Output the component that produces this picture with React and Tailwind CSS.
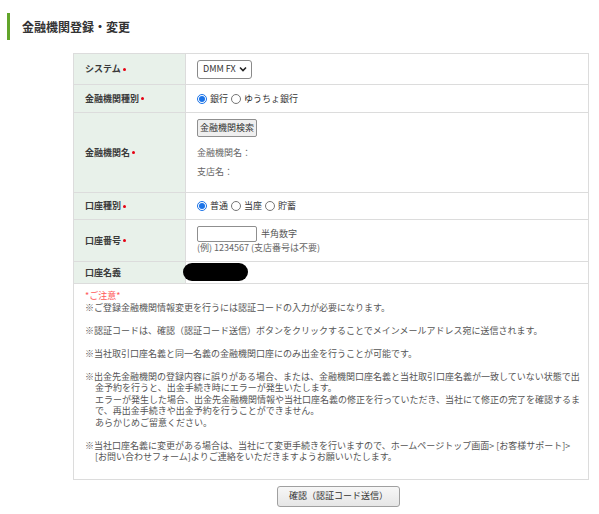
import React from "react";

function Radio({ checked }) {
  return checked ? (
    <span className="inline-flex h-[10px] w-[10px] shrink-0 items-center justify-center rounded-full border border-[#1a73e8] bg-white">
      <span className="block h-[6px] w-[6px] rounded-full bg-[#1a73e8]" />
    </span>
  ) : (
    <span className="inline-block h-[10px] w-[10px] shrink-0 rounded-full border border-[#767676] bg-white" />
  );
}

function Label({ children, req = true }) {
  return (
    <div className="flex items-center border-b border-r border-[#dcdcdc] bg-[#e8f1ea] pl-[11px] font-semibold text-[#3a3a3a]">
      <span>{children}</span>
      {req && <span className="ml-[2px] block h-[3px] w-[3px] rounded-full bg-[#e60012]" />}
    </div>
  );
}

function Value({ children, className = "" }) {
  return (
    <div className={"flex border-b border-r border-[#dcdcdc] bg-white pl-[11px] text-[#333] " + className}>
      {children}
    </div>
  );
}

export default function App() {
  return (
    <div className="min-h-[514px] w-[599px] bg-white pl-[7px] pt-[13px] text-[9px] [font-family:'Noto_Sans_CJK_JP',sans-serif]">
      <div className="flex h-[27px] items-center border-l-[3px] border-[#62a52a] pl-[12px] text-[12px] font-bold text-[#333]">
        金融機関登録・変更
      </div>

      <div className="ml-[66px] mt-[13px] w-[516px]">
        <div className="grid grid-cols-[112px_1fr] grid-rows-[31px_28px_80px_27px_42px_22px] border-l border-t border-[#dcdcdc]">
          <Label>システム</Label>
          <Value className="items-center">
            <div className="flex h-[19px] w-[55px] items-center justify-between rounded-[3px] border border-[#8a8a8a] bg-white pl-[5px] pr-[4px] text-[9px] text-[#333]">
              <span>DMM FX</span>
              <svg width="8" height="6" viewBox="0 0 8 6">
                <path d="M1 1.5 L4 4.5 L7 1.5" fill="none" stroke="#222" strokeWidth="1.6" />
              </svg>
            </div>
          </Value>

          <Label>金融機関種別</Label>
          <Value className="items-center gap-[3px]">
            <Radio checked />
            <span>銀行</span>
            <Radio />
            <span>ゆうちょ銀行</span>
          </Value>

          <Label>金融機関名</Label>
          <Value className="flex-col items-start pt-[6px]">
            <div className="flex h-[18px] items-center rounded-[2px] border border-[#8f8f8f] bg-[#efefef] px-[2px] text-[9px] text-[#333]">
              金融機関検索
            </div>
            <div className="mt-[6px] leading-[19px] text-[#666]">
              <div>金融機関名：</div>
              <div>支店名：</div>
            </div>
          </Value>

          <Label>口座種別</Label>
          <Value className="items-center gap-[3px]">
            <Radio checked />
            <span>普通</span>
            <Radio />
            <span>当座</span>
            <Radio />
            <span>貯蓄</span>
          </Value>

          <Label>口座番号</Label>
          <Value className="flex-col items-start pt-[6px] text-[#666]">
            <div className="flex items-center">
              <div className="h-[16px] w-[60px] rounded-[2px] border border-[#8f8f8f] bg-white" />
              <span className="ml-[4px] text-[#555]">半角数字</span>
            </div>
            <div className="leading-[12px]">(例) 1234567 (支店番号は不要)</div>
          </Value>

          <Label req={false}>口座名義</Label>
          <Value className="relative items-center">
            <div className="absolute left-[-3px] top-[1px] h-[18px] w-[65px] rounded-full bg-black" />
          </Value>
        </div>

        <div className="border-b border-l border-r border-[#dcdcdc] pb-[16px] pl-[11px] pt-[6px] leading-[11.5px] text-[#555] whitespace-nowrap">
          <div className="text-[#ff5a5a]">*ご注意*</div>
          <div>※ご登録金融機関情報変更を行うには認証コードの入力が必要になります。</div>
          <div className="h-[11.5px]" />
          <div>※認証コードは、確認（認証コード送信）ボタンをクリックすることでメインメールアドレス宛に送信されます。</div>
          <div className="h-[11.5px]" />
          <div>※当社取引口座名義と同一名義の金融機関口座にのみ出金を行うことが可能です。</div>
          <div className="h-[11.5px]" />
          <div>※出金先金融機関の登録内容に誤りがある場合、または、金融機関口座名義と当社取引口座名義が一致していない状態で出</div>
          <div className="pl-[10px]">金予約を行うと、出金手続き時にエラーが発生いたします。</div>
          <div className="pl-[10px]">エラーが発生した場合、出金先金融機関情報や当社口座名義の修正を行っていただき、当社にて修正の完了を確認するま</div>
          <div className="pl-[10px]">で、再出金手続きや出金予約を行うことができません。</div>
          <div className="pl-[10px]">あらかじめご留意ください。</div>
          <div className="h-[11.5px]" />
          <div>※当社口座名義に変更がある場合は、当社にて変更手続きを行いますので、ホームページトップ画面&gt; [お客様サポート]&gt;</div>
          <div className="pl-[10px]">[お問い合わせフォーム]よりご連絡をいただきますようお願いいたします。</div>
        </div>

        <div className="ml-[204px] mt-[6px] flex h-[21px] w-[123px] items-center justify-center rounded-[3px] border border-[#a0a0a0] bg-gradient-to-b from-[#f7f7f7] to-[#e6e6e6] text-[9px] text-[#333]">
          確認（認証コード送信）
        </div>
      </div>
    </div>
  );
}
